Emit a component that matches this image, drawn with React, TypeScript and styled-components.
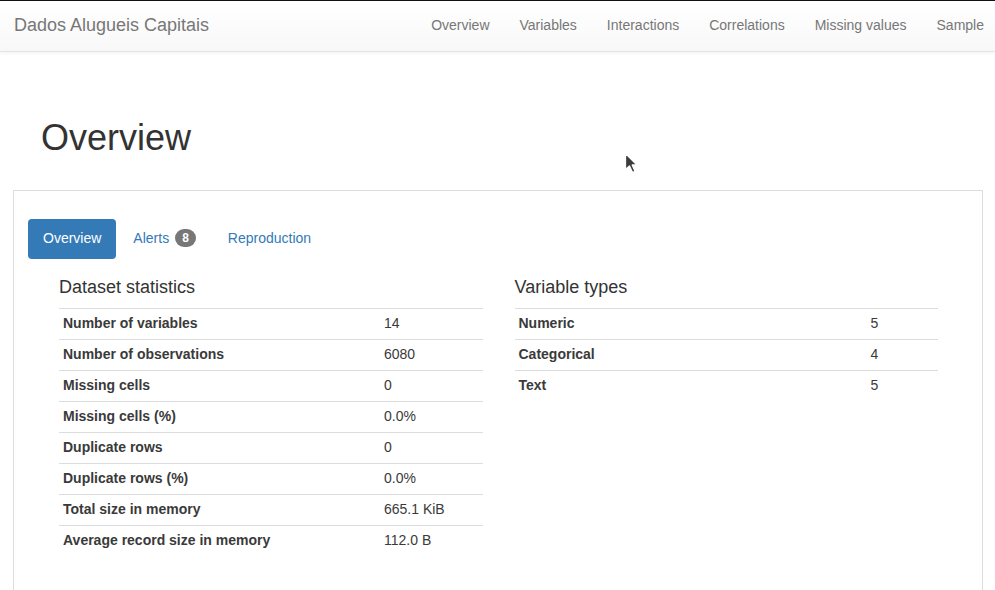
import styled, { createGlobalStyle } from "styled-components";

const GlobalStyle = createGlobalStyle`
  * {
    box-sizing: border-box;
  }

  body {
    margin: 0;
    background: #ffffff;
    color: #333333;
    font-family: "Liberation Sans", Arial, sans-serif;
    font-size: 14px;
    line-height: 20px;
  }
`;

const Page = styled.div`
  border-top: 1px solid #111111;
  height: 590px;
  overflow: hidden;
  position: relative;
`;

const Navbar = styled.nav`
  align-items: center;
  background: linear-gradient(to bottom, #ffffff 0%, #f8f8f8 100%);
  border-bottom: 1px solid #e3e3e3;
  box-shadow: 0 1px 4px rgba(0, 0, 0, 0.06);
  display: flex;
  height: 51px;
  justify-content: space-between;
  padding-left: 14px;
`;

const Brand = styled.a`
  color: #777777;
  font-size: 18px;
  line-height: 20px;
  margin-top: -2px;
`;

const NavLinks = styled.ul`
  display: flex;
  list-style: none;
  margin: -2px -4px 0 0;
  padding: 0;
`;

const NavLink = styled.li`
  color: #777777;
  line-height: 50px;
  padding: 0 15px;
`;

const Main = styled.main`
  padding: 0 12px 0 13px;
`;

const Title = styled.h1`
  font-size: 36px;
  font-weight: 500;
  line-height: 40px;
  margin: 66px 0 32px 28px;
`;

const Panel = styled.section`
  border: 1px solid #dddddd;
  min-height: 420px;
  padding: 28px 14px;
`;

const Pills = styled.ul`
  display: flex;
  gap: 2px;
  list-style: none;
  margin: 0;
  padding: 0;
`;

const Pill = styled.li<{ $active?: boolean }>`
  align-items: center;
  background: ${(p) => (p.$active ? "#337ab7" : "transparent")};
  border-radius: 4px;
  color: ${(p) => (p.$active ? "#ffffff" : "#337ab7")};
  display: flex;
  line-height: 20px;
  padding: 9px 15px 11px;
`;

const Badge = styled.span`
  background: #777777;
  border-radius: 10px;
  color: #ffffff;
  font-size: 12px;
  font-weight: 700;
  line-height: 12px;
  margin-left: 6px;
  padding: 3px 7px;
`;

const TabContent = styled.div`
  display: grid;
  gap: 32px;
  grid-template-columns: 1fr 1fr;
  padding: 0 30px 0 31px;
`;

const SectionTitle = styled.h4`
  font-size: 18px;
  font-weight: 500;
  line-height: 20px;
  margin: 18px 0 11px;
`;

const StatsTable = styled.table`
  border-collapse: collapse;
  color: #3a3a3a;
  width: 100%;
`;

const Row = styled.tr`
  border-top: 1px solid #dddddd;
`;

const Label = styled.th<{ $width: number }>`
  font-weight: 700;
  padding: 4px 4px 6px;
  text-align: left;
  width: ${(p) => p.$width}px;
`;

const Value = styled.td`
  padding: 4px 4px 6px;
`;

const Cursor = styled.svg`
  left: 624px;
  position: absolute;
  top: 151px;
`;

const navItems = [
  "Overview",
  "Variables",
  "Interactions",
  "Correlations",
  "Missing values",
  "Sample",
];

const datasetStats: [string, string][] = [
  ["Number of variables", "14"],
  ["Number of observations", "6080"],
  ["Missing cells", "0"],
  ["Missing cells (%)", "0.0%"],
  ["Duplicate rows", "0"],
  ["Duplicate rows (%)", "0.0%"],
  ["Total size in memory", "665.1 KiB"],
  ["Average record size in memory", "112.0 B"],
];

const variableTypes: [string, string][] = [
  ["Numeric", "5"],
  ["Categorical", "4"],
  ["Text", "5"],
];

function Stats({ rows, labelWidth }: { rows: [string, string][]; labelWidth: number }) {
  return (
    <StatsTable>
      <tbody>
        {rows.map(([label, value]) => (
          <Row key={label}>
            <Label $width={labelWidth}>{label}</Label>
            <Value>{value}</Value>
          </Row>
        ))}
      </tbody>
    </StatsTable>
  );
}

function App() {
  return (
    <>
      <GlobalStyle />
      <Page>
        <Navbar>
          <Brand>Dados Alugueis Capitais</Brand>
          <NavLinks>
            {navItems.map((item) => (
              <NavLink key={item}>{item}</NavLink>
            ))}
          </NavLinks>
        </Navbar>
        <Main>
          <Title>Overview</Title>
          <Panel>
            <Pills>
              <Pill $active>Overview</Pill>
              <Pill>
                Alerts <Badge>8</Badge>
              </Pill>
              <Pill>Reproduction</Pill>
            </Pills>
            <TabContent>
              <div>
                <SectionTitle>Dataset statistics</SectionTitle>
                <Stats rows={datasetStats} labelWidth={321} />
              </div>
              <div>
                <SectionTitle>Variable types</SectionTitle>
                <Stats rows={variableTypes} labelWidth={352} />
              </div>
            </TabContent>
          </Panel>
        </Main>
        <Cursor width="16" height="24" viewBox="0 0 16 24">
          <path
            d="M1.5 1.5 L1.5 17.5 L5.5 14 L8.5 20.5 L11 19.3 L8.2 13 L13 13 Z"
            fill="#3c3c3c"
            stroke="#ffffff"
            strokeWidth="1.3"
            strokeLinejoin="round"
          />
        </Cursor>
      </Page>
    </>
  );
}

export default App;
